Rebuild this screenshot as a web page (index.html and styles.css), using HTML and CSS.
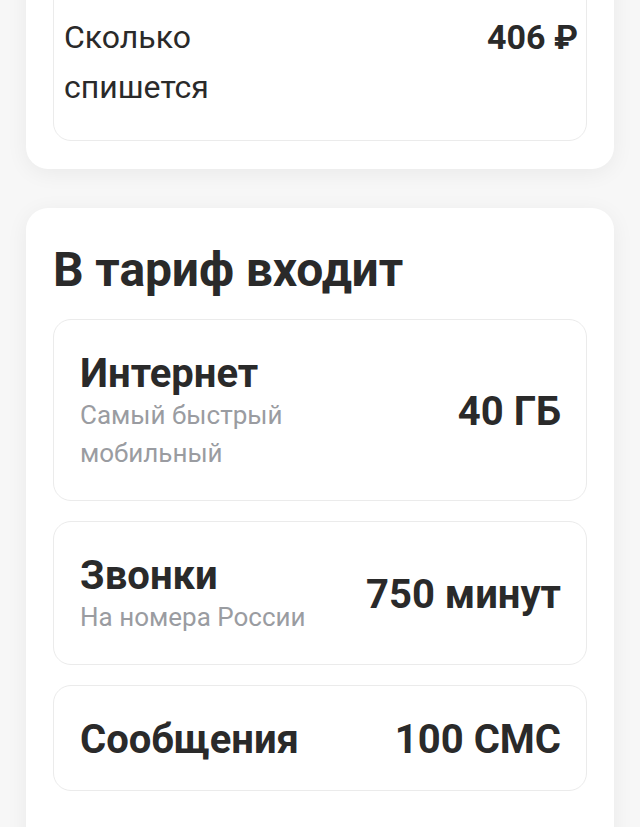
FILE: index.html
```html
<!DOCTYPE html>
<html lang="ru">
<head>
<meta charset="utf-8">
<title>Тариф</title>
<link rel="stylesheet" href="styles.css">
</head>
<body>
  <main class="page">
    <section class="panel panel-charge">
      <div class="tile tile-charge">
        <div class="charge-label">Сколько<br>спишется</div>
        <div class="charge-value">406 ₽</div>
      </div>
    </section>

    <section class="panel panel-plan">
      <h2 class="panel-title">В тариф входит</h2>
      <div class="tile-list">
        <div class="tile">
          <div class="tile-text">
            <div class="tile-name">Интернет</div>
            <div class="tile-note">Самый быстрый<br>мобильный</div>
          </div>
          <div class="tile-value">40 ГБ</div>
        </div>
        <div class="tile">
          <div class="tile-text">
            <div class="tile-name">Звонки</div>
            <div class="tile-note">На номера России</div>
          </div>
          <div class="tile-value">750 минут</div>
        </div>
        <div class="tile">
          <div class="tile-text">
            <div class="tile-name">Сообщения</div>
          </div>
          <div class="tile-value">100 СМС</div>
        </div>
      </div>
    </section>
  </main>
</body>
</html>
```

FILE: styles.css
```css
* {
  box-sizing: border-box;
}

html,
body {
  margin: 0;
  padding: 0;
  background: #f7f7f7;
  height: 100%;
  overflow: hidden;
}

body {
  font-family: Roboto, "Noto Sans", "Liberation Sans", sans-serif;
  color: #2a2a2a;
}

.page {
  display: flex;
  flex-direction: column;
  gap: 39px;
  padding: 0 26px;
  margin-top: -60px;
}

.panel {
  background: #ffffff;
  border-radius: 22px;
  box-shadow: 0 4px 22px rgba(0, 0, 0, 0.06);
  padding: 27px 27px 28px;
}

.tile {
  display: flex;
  align-items: center;
  justify-content: space-between;
  border: 1.5px solid #ebebeb;
  border-radius: 18px;
  padding: 32px 25px 28px 26px;
}

/* charge summary */
.tile-charge {
  align-items: flex-start;
  padding: 44px 8px 28px 10px;
}

.charge-label {
  font-size: 32px;
  line-height: 50px;
  font-weight: 400;
}

.charge-value {
  font-size: 34px;
  line-height: 50px;
  font-weight: 700;
}

/* included in plan */
.panel-plan {
  padding-top: 38px;
  min-height: 700px;
}

.panel-title {
  margin: 0 0 25px;
  font-size: 48px;
  line-height: 48px;
  font-weight: 700;
  letter-spacing: -0.1px;
}

.tile-list {
  display: flex;
  flex-direction: column;
  gap: 20px;
}

.tile-name {
  font-size: 40px;
  line-height: 44px;
  font-weight: 700;
}

.tile-note {
  font-size: 26px;
  line-height: 38px;
  color: #9a9ca1;
}

.tile-value {
  font-size: 40px;
  line-height: 44px;
  font-weight: 700;
  white-space: nowrap;
}
```
